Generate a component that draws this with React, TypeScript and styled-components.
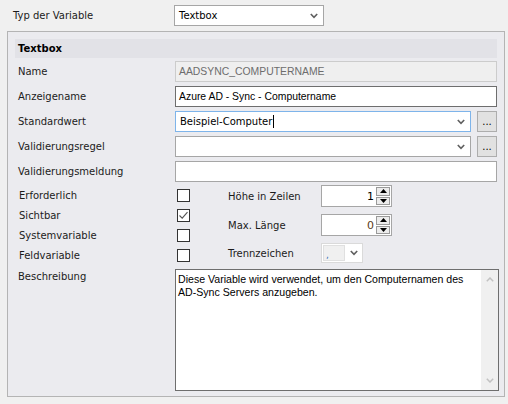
import React from "react";
import styled, { createGlobalStyle } from "styled-components";

const Global = createGlobalStyle`
  html, body { margin: 0; padding: 0; background: #f0f0f0; }
  body {
    width: 508px; height: 404px; overflow: hidden;
    font-family: "DejaVu Sans", "Noto Sans", sans-serif;
    font-size: 10px; color: #1b1b1b;
  }
`;

const Page = styled.div`
  padding-top: 5px;
`;

const TopRow = styled.div`
  display: flex;
  align-items: center;
  height: 21px;
`;

const TopLabel = styled.div`
  width: 161px;
  padding-left: 13px;
`;

const Combo = styled.div<{ $width?: number; $focused?: boolean }>`
  box-sizing: border-box;
  display: flex;
  align-items: center;
  height: 100%;
  width: ${(p) => (p.$width ? `${p.$width}px` : "auto")};
  flex: ${(p) => (p.$width ? "none" : "1")};
  background: #fff;
  border: 1px solid ${(p) => (p.$focused ? "#7eb4ea" : "#a6a6a6")};
`;

const ComboText = styled.div`
  flex: 1;
  display: flex;
  align-items: center;
  padding-left: 4px;
  white-space: nowrap;
  color: #000;
`;

const ChevronBox = styled.div`
  width: 18px;
  display: flex;
  align-items: center;
  justify-content: center;
`;

const Caret = styled.span`
  display: inline-block;
  width: 1px;
  height: 13px;
  background: #000;
  margin-left: 1px;
`;

const Chevron = ({ color = "#606060" }: { color?: string }) => (
  <svg width="8" height="6" viewBox="0 0 8 6">
    <path d="M0.8 1 L4 4.4 L7.2 1" stroke={color} strokeWidth="1.6" fill="none" />
  </svg>
);

const Panel = styled.div`
  box-sizing: border-box;
  margin: 5px 0 0 7px;
  width: 498px;
  height: 366px;
  border: 1px solid #b4b4b4;
  background: #ebebef;
  padding: 7px 7px 0;
`;

const Header = styled.div`
  height: 19px;
  background: #e2e2e7;
  display: flex;
  align-items: center;
  padding-left: 3px;
  font-weight: bold;
  font-size: 10px;
  color: #000;
`;

const Form = styled.div`
  display: grid;
  grid-template-columns: 160px 1fr;
  grid-template-rows: repeat(5, 21px);
  row-gap: 4px;
  margin-top: 3px;
`;

const FieldLabel = styled.div`
  align-self: center;
  padding-left: 3px;
`;

const TextBox = styled.div<{ $tone?: "dark" | "light" | "disabled" }>`
  box-sizing: border-box;
  height: 100%;
  display: flex;
  align-items: center;
  padding-left: 3px;
  font-family: "Liberation Sans", Arial, sans-serif;
  font-size: 10.4px;
  white-space: nowrap;
  background: ${(p) => (p.$tone === "disabled" ? "#efefef" : "#fff")};
  color: ${(p) => (p.$tone === "disabled" ? "#6d6d6d" : "#000")};
  border: 1px solid
    ${(p) => (p.$tone === "dark" ? "#6e6e6e" : p.$tone === "disabled" ? "#cccccc" : "#a6a6a6")};
`;

const ComboRow = styled.div`
  display: flex;
  gap: 6px;
  height: 100%;
`;

const DotsButton = styled.div`
  box-sizing: border-box;
  width: 20px;
  height: 100%;
  background: #e1e1e1;
  border: 1px solid #adadad;
  display: flex;
  align-items: flex-end;
  justify-content: center;
  padding-bottom: 4px;
  font-size: 10px;
  line-height: 1;
  color: #000;
`;

const Options = styled.div`
  display: flex;
  margin-top: 3px;
`;

const LeftCol = styled.div`
  width: 213px;
  display: flex;
  flex-direction: column;
`;

const CheckRow = styled.div`
  display: grid;
  grid-template-columns: 162px 13px;
  height: 20px;
  align-items: center;
`;

const CheckLabel = styled.div`
  padding-left: 4px;
`;

const CheckBox = styled.div`
  box-sizing: border-box;
  width: 13px;
  height: 13px;
  border: 1px solid #333;
  background: #fff;
  display: flex;
  align-items: center;
  justify-content: center;
`;

const RightCol = styled.div`
  display: flex;
  flex-direction: column;
  gap: 7px;
`;

const RightRow = styled.div`
  display: grid;
  grid-template-columns: 93px auto;
  align-items: center;
`;

const Spin = styled.div`
  box-sizing: border-box;
  width: 71px;
  height: 22px;
  border: 1px solid #a6a6a6;
  background: #fff;
  display: flex;
  align-items: stretch;
`;

const SpinValue = styled.div<{ $accent?: boolean }>`
  flex: 1;
  display: flex;
  align-items: center;
  justify-content: flex-end;
  padding-right: 2px;
  font-size: 11px;
  color: ${(p) => (p.$accent ? "#5a3a18" : "#000")};
`;

const SpinButtons = styled.div`
  width: 14px;
  margin: 1px 1px 1px 0;
  display: flex;
  flex-direction: column;
  gap: 1px;
`;

const SpinHalf = styled.div`
  flex: 1;
  box-sizing: border-box;
  border: 1px solid #9a9a9a;
  background: #ececec;
  display: flex;
  align-items: center;
  justify-content: center;
`;

const SmallCombo = styled.div`
  box-sizing: border-box;
  width: 42px;
  height: 20px;
  border: 1px solid #dadada;
  background: #fff;
  display: flex;
`;

const SmallComboField = styled.div`
  box-sizing: border-box;
  width: 22px;
  margin: 1px;
  background: #f0f0f0;
  border: 1px solid #e0e0e0;
  display: flex;
  align-items: flex-end;
  padding-left: 2px;
  font-size: 9px;
  line-height: 1;
  color: #3a6fb5;
`;

const SmallComboArrow = styled.div`
  flex: 1;
  display: flex;
  align-items: center;
  justify-content: center;
`;

const DescRow = styled.div`
  display: grid;
  grid-template-columns: 160px 1fr;
  margin-top: 4px;
`;

const DescLabel = styled.div`
  padding-left: 3px;
  padding-top: 2px;
`;

const TextArea = styled.div`
  box-sizing: border-box;
  height: 122px;
  margin-right: -2px;
  border: 1px solid #6e6e6e;
  background: #fff;
  display: flex;
`;

const TextAreaContent = styled.div`
  flex: 1;
  padding: 3px 2px;
  font-family: "Liberation Sans", Arial, sans-serif;
  font-size: 10.6px;
  line-height: 13px;
  color: #000;
  white-space: nowrap;
`;

const ScrollBar = styled.div`
  width: 17px;
  background: #f0f0f0;
  display: flex;
  flex-direction: column;
  justify-content: space-between;
  align-items: center;
  padding: 7px 0;
`;

const Check = () => (
  <svg width="11" height="11" viewBox="0 0 11 11">
    <path d="M1.5 5.5 L4.2 8.2 L9.5 2.2" stroke="#555" strokeWidth="1.1" fill="none" />
  </svg>
);

const Tri = ({ up }: { up?: boolean }) => (
  <svg width="7" height="4" viewBox="0 0 7 4">
    <path d={up ? "M0 4 L3.5 0 L7 4 Z" : "M0 0 L3.5 4 L7 0 Z"} fill="#000" />
  </svg>
);

const ScrollChevron = ({ up }: { up?: boolean }) => (
  <svg width="8" height="5" viewBox="0 0 8 5">
    <path d={up ? "M0.8 4.2 L4 1 L7.2 4.2" : "M0.8 0.8 L4 4 L7.2 0.8"} stroke="#c2c2c2" strokeWidth="1.5" fill="none" />
  </svg>
);

const checks: { label: string; checked: boolean }[] = [
  { label: "Erforderlich", checked: false },
  { label: "Sichtbar", checked: true },
  { label: "Systemvariable", checked: false },
  { label: "Feldvariable", checked: false },
];

export default function App() {
  return (
    <Page>
      <Global />
      <TopRow>
        <TopLabel>Typ der Variable</TopLabel>
        <Combo $width={150}>
          <ComboText>Textbox</ComboText>
          <ChevronBox>
            <Chevron />
          </ChevronBox>
        </Combo>
      </TopRow>

      <Panel>
        <Header>Textbox</Header>
        <Form>
          <FieldLabel>Name</FieldLabel>
          <TextBox $tone="disabled">AADSYNC_COMPUTERNAME</TextBox>

          <FieldLabel>Anzeigename</FieldLabel>
          <TextBox $tone="dark">Azure AD - Sync - Computername</TextBox>

          <FieldLabel>Standardwert</FieldLabel>
          <ComboRow>
            <Combo $focused>
              <ComboText>
                Beispiel-Computer
                <Caret />
              </ComboText>
              <ChevronBox>
                <Chevron />
              </ChevronBox>
            </Combo>
            <DotsButton>...</DotsButton>
          </ComboRow>

          <FieldLabel>Validierungsregel</FieldLabel>
          <ComboRow>
            <Combo>
              <ComboText />
              <ChevronBox>
                <Chevron />
              </ChevronBox>
            </Combo>
            <DotsButton>...</DotsButton>
          </ComboRow>

          <FieldLabel>Validierungsmeldung</FieldLabel>
          <TextBox $tone="light" />
        </Form>

        <Options>
          <LeftCol>
            {checks.map((c) => (
              <CheckRow key={c.label}>
                <CheckLabel>{c.label}</CheckLabel>
                <CheckBox>{c.checked && <Check />}</CheckBox>
              </CheckRow>
            ))}
          </LeftCol>
          <RightCol>
            <RightRow>
              <div>Höhe in Zeilen</div>
              <Spin>
                <SpinValue>1</SpinValue>
                <SpinButtons>
                  <SpinHalf>
                    <Tri up />
                  </SpinHalf>
                  <SpinHalf>
                    <Tri />
                  </SpinHalf>
                </SpinButtons>
              </Spin>
            </RightRow>
            <RightRow>
              <div>Max. Länge</div>
              <Spin>
                <SpinValue $accent>0</SpinValue>
                <SpinButtons>
                  <SpinHalf>
                    <Tri up />
                  </SpinHalf>
                  <SpinHalf>
                    <Tri />
                  </SpinHalf>
                </SpinButtons>
              </Spin>
            </RightRow>
            <RightRow>
              <div>Trennzeichen</div>
              <SmallCombo>
                <SmallComboField>,</SmallComboField>
                <SmallComboArrow>
                  <Chevron />
                </SmallComboArrow>
              </SmallCombo>
            </RightRow>
          </RightCol>
        </Options>

        <DescRow>
          <DescLabel>Beschreibung</DescLabel>
          <TextArea>
            <TextAreaContent>
              Diese Variable wird verwendet, um den Computernamen des
              <br />
              AD-Sync Servers anzugeben.
            </TextAreaContent>
            <ScrollBar>
              <ScrollChevron up />
              <ScrollChevron />
            </ScrollBar>
          </TextArea>
        </DescRow>
      </Panel>
    </Page>
  );
}
